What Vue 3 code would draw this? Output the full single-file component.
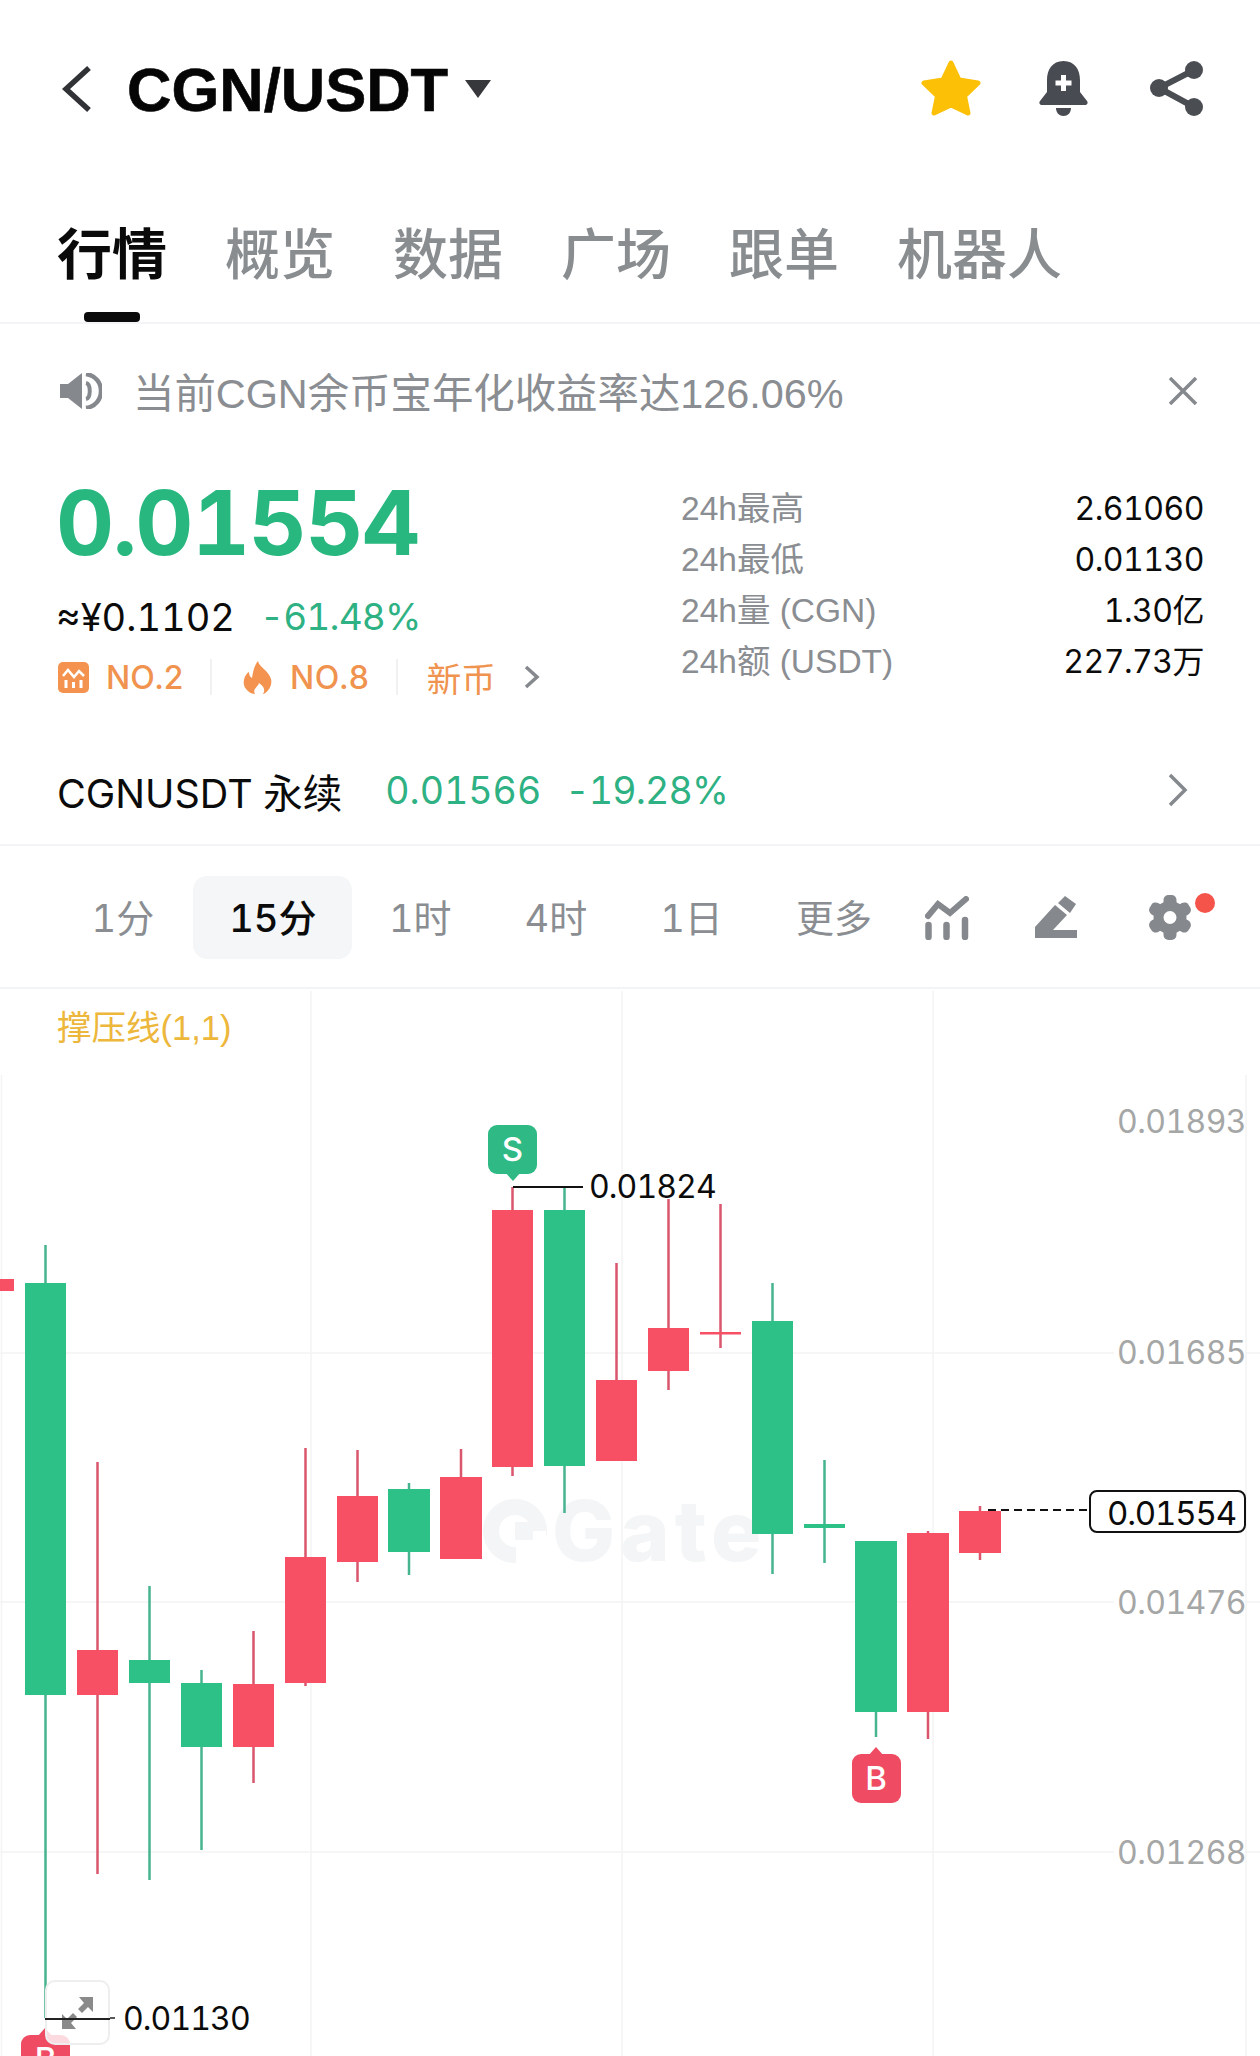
<template>
  <div class="page">
    <header class="top-bar">
      <svg class="back" width="30" height="48" viewBox="0 0 30 48"><path d="M27 3 4 24l23 21" fill="none" stroke="#303236" stroke-width="5.5" /></svg>
      <span class="pair">CGN/USDT</span>
      <span class="caret"></span>
      <div class="top-actions">
        <svg width="60" height="56" viewBox="0 0 60 56"><path d="M30 3l8 17 19 3-13.500 13L47 53l-17-8-17 8 3.500-17L3 23l19-3z" fill="#fcc106" stroke="#fcc106" stroke-width="5" stroke-linejoin="round" /></svg>
        <svg width="51" height="55" viewBox="0 0 51 55">
          <path d="M25.500 0C14 0 9 9 9 19v12L2 40c-1.500 2 0 4 2 4h43c2 0 3.500-2 2-4l-7-9V19C42 9 37 0 25.500 0z" fill="#484b51" />
          <path d="M18 47h15c0 5-3.500 8-7.500 8S18 52 18 47z" fill="#484b51" />
          <path d="M25.500 14v16M17.500 22h16" stroke="#fff" stroke-width="5" />
        </svg>
        <svg class="share" width="54" height="55" viewBox="0 0 54 55">
          <path d="M44 9 9 27l35 19" fill="none" stroke="#4a4d52" stroke-width="6" />
          <circle cx="44" cy="9" r="9" fill="#4a4d52" /><circle cx="9" cy="27" r="9" fill="#4a4d52" /><circle cx="44" cy="46" r="9" fill="#4a4d52" />
        </svg>
      </div>
    </header>

    <nav class="tabs">
      <div v-for="(t, i) in tabs" :key="t" :class="['tab', { active: i === 0 }]">
        {{ t }}
        <span v-if="i === 0" class="tab-bar"></span>
      </div>
    </nav>

    <div class="notice">
      <svg width="42" height="36" viewBox="0 0 42 36">
        <path d="M0 11h8L22 0v36L8 25H0z" fill="#85898d" />
        <path d="M26 10c5 1 5 15 0 16" fill="none" stroke="#85898d" stroke-width="4" />
        <path d="M26 1c20 3 20 31 0 34" fill="none" stroke="#85898d" stroke-width="4.500" />
      </svg>
      <span class="notice-text">当前CGN余币宝年化收益率达126.06%</span>
      <svg class="close" width="30" height="28" viewBox="0 0 30 28"><path d="M2 1l26 26M28 1 2 27" stroke="#85898d" stroke-width="3.500" /></svg>
    </div>

    <section class="summary">
      <div class="summary-left">
        <div class="price">0.01554</div>
        <div class="sub">
          <span class="cny">≈¥0.1102</span>
          <span class="chg">-61.48%</span>
        </div>
        <div class="badges">
          <svg width="31" height="31" viewBox="0 0 31 31">
            <rect width="31" height="31" rx="5" fill="#f4934f" />
            <path d="M5 14l5-6 6 7 5-6 5 5" fill="none" stroke="#fff" stroke-width="2.500" />
            <path d="M8 18v8M15.500 20v6M23 18v8" stroke="#fff" stroke-width="3" />
          </svg>
          <span class="badge-text no2">NO.2</span>
          <i class="badge-sep"></i>
          <svg width="29" height="33" viewBox="0 0 29 33">
            <path d="M15 0c1 6 11 10 13 18 2 8-5 15-8 15 2-3 2-7-4-11-1 4-7 6-4 11C7 33-1 27 1 19c.5-4 3-7 5-8 0 3 1 5 3 6 1-6 2-12 6-17z" fill="#f4934f" />
          </svg>
          <span class="badge-text no8">NO.8</span>
          <i class="badge-sep"></i>
          <span class="badge-text new">新币</span>
          <svg class="badge-arrow" width="16" height="24" viewBox="0 0 16 24"><path d="M2 2l11 10L2 22" fill="none" stroke="#85898d" stroke-width="3.500" /></svg>
        </div>
      </div>
      <dl class="stats">
        <div v-for="s in stats" :key="s.label" class="stat">
          <dt>{{ s.label }}</dt>
          <dd>{{ s.value }}</dd>
        </div>
      </dl>
    </section>

    <div class="perp">
      <span class="perp-name">CGNUSDT 永续</span>
      <span class="perp-price">0.01566</span>
      <span class="perp-chg">-19.28%</span>
      <svg class="perp-arrow" width="20" height="34" viewBox="0 0 20 34"><path d="M2 2l15 15L2 32" fill="none" stroke="#85898d" stroke-width="3.500" /></svg>
    </div>

    <div class="toolbar">
      <span v-for="(f, i) in frames" :key="f" :class="['frame', { on: i === 1 }]">{{ f }}</span>
      <div class="tools">
        <svg width="44" height="44" viewBox="0 0 44 44">
          <path d="M3 20 13 8l12 9L41 3" fill="none" stroke="#85898d" stroke-width="6" stroke-linecap="round" />
          <path d="M3.500 29v12M21.500 29v12M40 24v17" stroke="#85898d" stroke-width="6.500" stroke-linecap="round" />
        </svg>
        <svg class="pencil" width="42" height="43" viewBox="0 0 42 43">
          <path d="M30 0l11 8-6 9-12-10zM20 9l12 10-14 15h24v8H0V31z" fill="#85898d" />
        </svg>
        <span class="gear">
          <svg width="42" height="45" viewBox="0 0 42 45">
            <g fill="#85898d">
              <circle cx="21" cy="22.500" r="16.500" />
              <rect x="14.500" y="0" width="13" height="45" rx="5" />
              <rect x="14.500" y="0" width="13" height="45" rx="5" transform="rotate(60 21 22.500)" />
              <rect x="14.500" y="0" width="13" height="45" rx="5" transform="rotate(120 21 22.500)" />
            </g>
            <circle cx="21" cy="22.500" r="6.500" fill="#fff" />
          </svg>
          <i class="gear-dot"></i>
        </span>
      </div>
    </div>

    <div class="chart">
      <div class="indicator">撑压线(1,1)</div>
      <svg class="chart-svg" width="1260" height="1067" viewBox="0 989 1260 1067">
        <!-- grid -->
        <g stroke="#f3f4f5" stroke-width="1.500">
          <path d="M311 991V2056M622 991V2056M933 991V2056M1.500 1075V2056M1246 1075V2056" />
          <path d="M0 1353H1260M0 1602H1260M0 1852H1260" />
        </g>

        <!-- watermark -->
        <g fill="#f4f5f6">
          <circle cx="515" cy="1531" r="24" fill="none" stroke="#f4f5f6" stroke-width="16" />
          <rect x="516" y="1531" width="30" height="32" fill="#fff" />
          <rect x="515" y="1522" width="18" height="18" />
          <text x="552" y="1561" class="watermark">Gate</text>
        </g>

        <!-- candles -->
        <g v-for="c in candles" :key="c.x">
          <rect :x="c.x + c.w / 2 - 1.250" :y="c.hi" width="2.500" :height="c.lo - c.hi" :fill="c.up ? '#46b48e' : '#d9566c'" />
          <rect :x="c.x" :y="c.top" :width="c.w" :height="c.bottom - c.top" :fill="c.up ? '#2dc087' : '#f74f64'" />
        </g>

        <!-- axis -->
        <g v-for="a in axis" :key="a.text">
          <rect x="1114" :y="a.y - 16" width="131" height="32" fill="#fff" />
          <text x="1246" :y="a.y + 12" text-anchor="end" class="axis">{{ a.text }}</text>
        </g>

        <!-- extremes -->
        <path d="M513 1187H583" stroke="#111" stroke-width="2" />
        <text x="589" y="1198" class="mark-val">0.01824</text>
        <text x="123" y="2030" class="mark-val">0.01130</text>
        <path d="M110 2018H115" stroke="#222" stroke-width="1.500" />

        <!-- last price -->
        <path d="M988 1510H1089" stroke="#111" stroke-width="2" stroke-dasharray="8 5" />
        <rect x="1090" y="1491" width="155" height="41" rx="7" fill="#fff" stroke="#111" stroke-width="2" />
        <text x="1107" y="1525" class="last">0.01554</text>

        <!-- trade markers -->
        <g>
          <rect x="488" y="1125" width="49" height="49" rx="9" fill="#2fb985" />
          <path d="M505 1172h16l-8 9z" fill="#2fb985" />
          <text x="512.500" y="1161" text-anchor="middle" class="trade">S</text>
        </g>
        <g>
          <rect x="852" y="1754" width="49" height="49" rx="9" fill="#ef4b63" />
          <path d="M868 1756h16l-8-9z" fill="#ef4b63" />
          <text x="876" y="1790" text-anchor="middle" class="trade">B</text>
        </g>
        <g>
          <rect x="21" y="2035" width="49" height="49" rx="9" fill="#ef4b63" />
          <path d="M37 2037h16l-8-9z" fill="#ef4b63" />
          <text x="45.500" y="2071" text-anchor="middle" class="trade">B</text>
        </g>
      </svg>

      <div class="expand">
        <svg width="34" height="34" viewBox="0 0 34 34">
          <path d="M32 1v15l-5-5-6 6-4-4 6-6-5-6zM1 33V18l5 5 6-6 4 4-6 6 5 6z" fill="#8a8a8a" />
        </svg>
        <i class="expand-line"></i>
      </div>
    </div>
  </div>
</template>

<script setup>
const tabs = ['行情', '概览', '数据', '广场', '跟单', '机器人']
const frames = ['1分', '15分', '1时', '4时', '1日', '更多']

const stats = [
  { label: '24h最高', value: '2.61060' },
  { label: '24h最低', value: '0.01130' },
  { label: '24h量 (CGN)', value: '1.30亿' },
  { label: '24h额 (USDT)', value: '227.73万' }
]

const axis = [
  { text: '0.01893', y: 1121 },
  { text: '0.01685', y: 1352 },
  { text: '0.01476', y: 1602 },
  { text: '0.01268', y: 1852 }
]

// x, width, body top/bottom, wick high/low, all in page pixels
const candles = [
  { x: -27, w: 41, top: 1279, bottom: 1291, hi: 1279, lo: 1291, up: false },
  { x: 25, w: 41, top: 1283, bottom: 1695, hi: 1245, lo: 2018, up: true },
  { x: 77, w: 41, top: 1650, bottom: 1695, hi: 1462, lo: 1874, up: false },
  { x: 129, w: 41, top: 1660, bottom: 1683, hi: 1586, lo: 1880, up: true },
  { x: 181, w: 41, top: 1683, bottom: 1747, hi: 1670, lo: 1850, up: true },
  { x: 233, w: 41, top: 1684, bottom: 1747, hi: 1631, lo: 1783, up: false },
  { x: 285, w: 41, top: 1557, bottom: 1683, hi: 1448, lo: 1686, up: false },
  { x: 337, w: 41, top: 1496, bottom: 1562, hi: 1450, lo: 1582, up: false },
  { x: 388, w: 42, top: 1489, bottom: 1552, hi: 1483, lo: 1575, up: true },
  { x: 440, w: 42, top: 1477, bottom: 1559, hi: 1449, lo: 1559, up: false },
  { x: 492, w: 41, top: 1210, bottom: 1467, hi: 1187, lo: 1476, up: false },
  { x: 544, w: 41, top: 1210, bottom: 1466, hi: 1187, lo: 1513, up: true },
  { x: 596, w: 41, top: 1380, bottom: 1461, hi: 1263, lo: 1380, up: false },
  { x: 648, w: 41, top: 1328, bottom: 1371, hi: 1199, lo: 1390, up: false },
  { x: 700, w: 41, top: 1332, bottom: 1334.500, hi: 1204, lo: 1348, up: false },
  { x: 752, w: 41, top: 1321, bottom: 1534, hi: 1283, lo: 1574, up: true },
  { x: 804, w: 41, top: 1524, bottom: 1528, hi: 1460, lo: 1563, up: true },
  { x: 855, w: 42, top: 1541, bottom: 1712, hi: 1541, lo: 1737, up: true },
  { x: 907, w: 42, top: 1533, bottom: 1712, hi: 1531, lo: 1739, up: false },
  { x: 959, w: 42, top: 1511, bottom: 1553, hi: 1506, lo: 1560, up: false }
]
</script>

<style>
html, body {
  background: #fff;
  overflow: hidden;
}
</style>

<style scoped>
.page {
  width: 1260px;
  height: 2056px;
  overflow: hidden;
  background: #fff;
  font-family: Inter, "Noto Sans CJK SC", sans-serif;
  font-variant-numeric: tabular-nums;
  color: #0b0b0b;
}

.top-bar {
  display: flex;
  align-items: center;
  height: 178px;
  padding: 0 56px 0 62px;
}

.pair {
  margin-left: 35px;
  font-family: "Liberation Sans", sans-serif;
  font-size: 61.500px;
  font-weight: 700;
  -webkit-text-stroke: 0.6px #050505;
  color: #050505;
}

.caret {
  margin: 0 0 0 17px;
  border-left: 13px solid transparent;
  border-right: 13px solid transparent;
  border-top: 18px solid #37383c;
}

.top-actions {
  display: flex;
  align-items: center;
  gap: 57px;
  margin-left: auto;
}

.top-actions svg {
  position: relative;
  top: -1px;
}

.top-actions .share {
  margin-left: 4px;
}

.tabs {
  display: flex;
  gap: 58px;
  height: 146px;
  padding-left: 57px;
  border-bottom: 2px solid #f3f4f5;
  box-sizing: border-box;
}

.tab {
  display: flex;
  flex-direction: column;
  align-items: center;
  padding-top: 46px;
  font-size: 55px;
  line-height: 60px;
  font-weight: 500;
  color: #898d90;
}

.tab.active {
  font-weight: 700;
  color: #0a0a0a;
}

.tab-bar {
  width: 56px;
  height: 11px;
  margin-top: 28px;
  border-radius: 4px;
  background: #0a0a0a;
}

.notice {
  display: flex;
  align-items: center;
  height: 134px;
  padding: 0 62px 0 60px;
}

.notice-text {
  position: relative;
  top: -1px;
  margin-left: 31px;
  font-family: "Liberation Sans", "Noto Sans CJK SC", sans-serif;
  font-size: 41.400px;
  color: #8a8d91;
}

.close {
  margin-left: auto;
}

.summary {
  display: flex;
  height: 268px;
  padding: 0 56px 0 58px;
}

.summary-left {
  width: 623px;
}

.price {
  margin: 15px 0 0 -2px;
  font-size: 90px;
  line-height: 100px;
  font-weight: 700;
  letter-spacing: -1.5px;
  color: #28b87f;
}

.sub {
  display: flex;
  gap: 25px;
  margin: 19px 0 0 -2px;
  font-size: 37px;
  line-height: 50px;
}

.cny {
  font-size: 38px;
}

.chg {
  letter-spacing: -0.8px;
  color: #2eb183;
}

.badges {
  display: flex;
  align-items: center;
  height: 36px;
  margin-top: 17px;
  font-size: 32px;
  font-weight: 500;
  color: #f0934f;
}

.badge-text {
  margin-left: 17px;
}

.badge-text.no8 {
  margin-left: 18px;
  letter-spacing: 0.4px;
}

.badge-sep {
  width: 2px;
  height: 36px;
  margin: 0 31px 0 26px;
  background: #f1f1f1;
}

.badge-text.new {
  margin-left: -2px;
  font-size: 34.500px;
  font-weight: 400;
}

.badge-arrow {
  margin-left: 28px;
}

.stats {
  flex: 1;
  margin: 25px 0 0;
}

.stat {
  display: flex;
  justify-content: space-between;
  font-size: 32px;
  line-height: 51px;
}

.stat dt {
  font-family: "Liberation Sans", "Noto Sans CJK SC", sans-serif;
  font-size: 33.500px;
  color: #8a8d91;
}

.stat dd {
  margin: 0;
  letter-spacing: -0.5px;
  color: #0b0b0b;
}

.perp {
  display: flex;
  align-items: center;
  height: 120px;
  padding: 10px 72px 0 57px;
  border-bottom: 2px solid #f3f4f5;
  box-sizing: border-box;
  font-size: 37.500px;
}

.perp-name {
  font-size: 39.500px;
  margin-right: 43px;
}

.perp-price, .perp-chg {
  color: #2eb183;
}

.perp-chg {
  margin-left: 24px;
  letter-spacing: -0.8px;
}

.perp-arrow {
  margin-left: auto;
}

.toolbar {
  display: flex;
  align-items: center;
  height: 143px;
  padding: 2px 0 0 55px;
  border-bottom: 2px solid #f3f4f5;
  box-sizing: border-box;
}

.frame {
  padding: 1px 36.500px 0;
  font-size: 38px;
  line-height: 82px;
  color: #8a8d91;
}

.frame.on {
  margin-left: 2.500px;
  padding: 1px 36px 0;
  border-radius: 14px;
  background: #f5f6f7;
  color: #0b0b0b;
  font-weight: 500;
}

.tools {
  display: flex;
  align-items: center;
  gap: 66px;
  margin-left: 17px;
}

.pencil {
  margin-right: 6px;
}

.gear {
  position: relative;
  display: flex;
}

.gear-dot {
  position: absolute;
  top: -2px;
  left: 46px;
  width: 20px;
  height: 20px;
  border-radius: 50%;
  background: #f4544a;
}

.chart {
  position: relative;
  height: 1067px;
}

.chart-svg {
  display: block;
}

.indicator {
  position: absolute;
  top: 16px;
  left: 57px;
  font-family: "Liberation Sans", "Noto Sans CJK SC", sans-serif;
  font-size: 34.500px;
  line-height: 46px;
  color: #edb73c;
}

.watermark {
  font-size: 84px;
  font-weight: 800;
  letter-spacing: 5px;
}

.axis {
  font-size: 32px;
  letter-spacing: -0.6px;
  fill: #a5a6a6;
}

.mark-val {
  font-size: 32px;
  letter-spacing: -0.9px;
  fill: #0b0b0b;
}

.last {
  font-size: 33px;
  letter-spacing: -1.2px;
  fill: #0b0b0b;
}

.trade {
  font-size: 33px;
  font-weight: 500;
  fill: #fff;
}

.expand {
  position: absolute;
  left: 45px;
  top: 991px;
  display: flex;
  align-items: center;
  justify-content: center;
  width: 65px;
  height: 65px;
  box-sizing: border-box;
  border: 2px solid #eee;
  border-radius: 10px;
  background: rgba(255, 255, 255, 0.8);
}

.expand-line {
  position: absolute;
  top: 36px;
  left: -2px;
  width: 65px;
  height: 1.500px;
  background: #222;
}
</style>
